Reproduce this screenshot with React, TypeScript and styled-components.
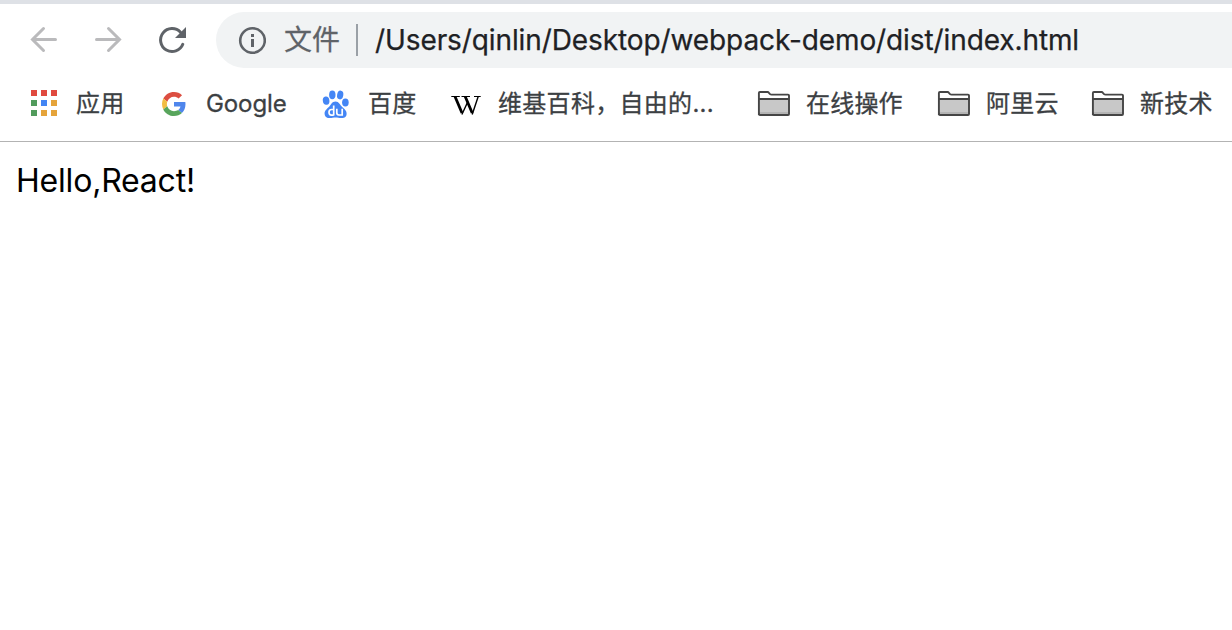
import React from "react";
import styled, { createGlobalStyle } from "styled-components";

const GlobalStyle = createGlobalStyle`
  * { box-sizing: border-box; }
  body { margin: 0; background: #fff; overflow: hidden; }
`;

const Browser = styled.div`
  width: 100%;
  height: 630px;
  display: flex;
  flex-direction: column;
  overflow: hidden;
  background: #fff;
  font-family: Inter, "Noto Sans CJK SC", sans-serif;
`;

const TabStripEdge = styled.div`
  height: 4px;
  flex: none;
  background: #dee1e6;
`;

const Toolbar = styled.div`
  height: 72px;
  flex: none;
  display: flex;
  align-items: center;
  padding-left: 28px;
`;

const NavButton = styled.button`
  width: 32px;
  height: 32px;
  margin: 0 32px 0 0;
  padding: 0;
  border: 0;
  background: none;
  flex: none;
  svg { display: block; }
`;

const AddressBar = styled.div`
  height: 56px;
  flex: 1;
  margin-left: -4px;
  display: flex;
  align-items: center;
  padding-left: 22px;
  border-radius: 28px 0 0 28px;
  background: #f1f3f4;
  white-space: nowrap;
  font-size: 28px;
  line-height: 40px;
  -webkit-text-stroke: 0.25px currentColor;
  svg { flex: none; }
`;

const Scheme = styled.span`
  width: 56px;
  margin-left: 18px;
  color: #5f6368;
`;

const Divider = styled.span`
  width: 2px;
  height: 32px;
  margin: 0 17px 0 16px;
  background: #9aa0a6;
`;

const Url = styled.span`
  color: #202124;
  letter-spacing: -0.1px;
`;

const BookmarkBar = styled.div`
  height: 66px;
  flex: none;
  display: flex;
  align-items: flex-start;
  padding: 10px 0 0 28px;
  border-bottom: 1px solid #b3b3b3;
`;

const Bookmark = styled.div<{ $labelWidth: number; $after: number; $spacing: number }>`
  display: flex;
  align-items: center;
  flex: none;
  height: 36px;
  margin-right: ${(p) => p.$after}px;
  svg { flex: none; }
  span {
    width: ${(p) => p.$labelWidth}px;
    margin-left: 16px;
    white-space: nowrap;
    font-size: 24px;
    line-height: 36px;
    letter-spacing: ${(p) => p.$spacing}px;
    color: #3c4043;
    -webkit-text-stroke: 0.3px currentColor;
  }
`;

const Page = styled.main`
  flex: 1;
  padding: 16px;
  font-size: 32px;
  line-height: 46px;
  color: #000;
`;

const Greeting = styled.div`
  letter-spacing: -0.2px;
`;

const BackIcon = () => (
  <svg width="32" height="32" viewBox="0 0 32 32" fill="none" stroke="#bababc" strokeWidth="3" strokeLinecap="round">
    <path d="M27.500 15.500H5M15.500 4.500 4.500 15.500 15.500 26.500" />
  </svg>
);

const ForwardIcon = () => (
  <svg width="32" height="32" viewBox="0 0 32 32" fill="none" stroke="#bababc" strokeWidth="3" strokeLinecap="round">
    <path d="M4.500 15.500H27M16.500 4.500 27.500 15.500 16.500 26.500" />
  </svg>
);

const ReloadIcon = () => (
  <svg width="32" height="32" viewBox="0 0 32 32">
    <path d="M26.800 20.300A11.500 11.500 0 1 1 24.500 8.200" fill="none" stroke="#5f6368" strokeWidth="3" strokeLinecap="round" />
    <path d="M30 3v11H19z" fill="#5f6368" />
  </svg>
);

const InfoIcon = () => (
  <svg width="28" height="28" viewBox="0 0 28 28">
    <circle cx="14.500" cy="14.500" r="12.300" fill="none" stroke="#5f6368" strokeWidth="2.600" />
    <path d="M13 8h3v3h-3zM13 13h3v8h-3z" fill="#5f6368" />
  </svg>
);

const APP_COLORS = ["#e04a3f", "#e04a3f", "#e04a3f", "#519b5c", "#4285f4", "#e5a43b", "#519b5c", "#e5a43b", "#e5a43b"];

const AppsIcon = () => (
  <svg width="32" height="32" viewBox="0 0 32 32">
    {APP_COLORS.map((color, i) => (
      <rect key={i} x={3 + (i % 3) * 10} y={2 + Math.floor(i / 3) * 10} width="6" height="6" fill={color} />
    ))}
  </svg>
);

const GoogleIcon = () => (
  <svg width="32" height="32" viewBox="0 0 32 32">
    <g transform="translate(4 4) scale(.5)">
      <path fill="#dc4e41" d="M24 9.500c3.540 0 6.710 1.220 9.210 3.600l6.850-6.850C35.900 2.380 30.470 0 24 0 14.620 0 6.510 5.380 2.560 13.220l7.980 6.190C12.430 13.720 17.740 9.500 24 9.500z" />
      <path fill="#4f86ec" d="M46.980 24.550c0-1.570-.15-3.090-.38-4.550H24v9.020h12.940c-.58 2.960-2.260 5.480-4.780 7.180l7.730 6c4.510-4.180 7.090-10.360 7.090-17.650z" />
      <path fill="#f2bd42" d="M10.530 28.590A14.400 14.400 0 0 1 9.770 24c0-1.600.27-3.140.76-4.590l-7.980-6.190A24 24 0 0 0 0 24c0 3.880.92 7.540 2.560 10.780z" />
      <path fill="#58a55c" d="M24 48c6.480 0 11.930-2.130 15.890-5.810l-7.730-6c-2.150 1.450-4.920 2.300-8.160 2.300-6.260 0-11.570-4.220-13.470-9.910l-7.980 6.190C6.510 42.620 14.620 48 24 48z" />
    </g>
  </svg>
);

const BaiduIcon = () => (
  <svg width="32" height="32" viewBox="0 0 32 32">
    <g fill="#4486f5">
      <ellipse cx="6.100" cy="12.600" rx="3.300" ry="4.200" transform="rotate(-8 6.100 12.600)" />
      <ellipse cx="12.300" cy="6.800" rx="3.200" ry="4.400" />
      <ellipse cx="20.200" cy="7" rx="3.100" ry="4.400" transform="rotate(10 20.200 7)" />
      <ellipse cx="25.400" cy="14.500" rx="3.300" ry="4.100" />
      <path d="M15.500 13.500c3.600 0 4.300 3.200 6.700 5.500 2.300 2.100 4.800 4 4.400 7.200-.4 3.400-3 3.900-5.500 3.900-2 0-3.500-.6-5.600-.6-2 0-3.600.6-5.600.6-2.500 0-5-.9-5.300-4.100-.3-3.300 2.300-5 4.500-7.200 2-2.100 2.900-5.300 6.400-5.300z" />
    </g>
    <g fill="none" stroke="#fff" strokeWidth="1.700">
      <path d="M13.700 17.500v10M13.700 21.500h-2.200q-2.500 0-2.500 2.800t2.500 2.800h2.200M16.800 20.800v4q0 2.200 2 2.200h3.400M22.200 20.800v6.900" />
    </g>
  </svg>
);

const WikipediaIcon = () => (
  <svg width="32" height="32" viewBox="0 0 32 32">
    <g fill="none" stroke="#000">
      <path d="M1.300 8.500h8.500M11.500 8.500h8.500M24 8.500h6.700" strokeWidth="1.100" />
      <path d="m5 8.500 7 16.500M15.200 8.500l7 16.500" strokeWidth="2.800" />
      <path d="m11.900 26.500 6-13M22.200 26.500l6-18" strokeWidth="1.400" />
    </g>
  </svg>
);

const FolderIcon = () => (
  <svg width="33" height="32" viewBox="0 0 33 32">
    <path d="M2 11h30v15H2z" fill="#c8c8c8" />
    <path d="M2 24h30v2H2z" fill="#b4b4b4" />
    <path d="M1.900 26V5q0-1 1-1h7.500q1 0 1.500.800l1.200 1.300q.5.500 1.500.500H31q1 0 1 1V26q0 1-1 1H3q-1 0-1-1zM2 11h30" fill="none" stroke="#454545" strokeWidth="1.900" />
  </svg>
);

const BOOKMARKS = [
  { label: "应用", Icon: AppsIcon, width: 48, after: 34, spacing: 0.2 },
  { label: "Google", Icon: GoogleIcon, width: 80, after: 34, spacing: -0.1 },
  { label: "百度", Icon: BaiduIcon, width: 48, after: 34, spacing: 0.2 },
  { label: "维基百科，自由的...", Icon: WikipediaIcon, width: 216, after: 43, spacing: 0.3 },
  { label: "在线操作", Icon: FolderIcon, width: 96, after: 35, spacing: 0.2 },
  { label: "阿里云", Icon: FolderIcon, width: 72, after: 33, spacing: 0.2 },
  { label: "新技术", Icon: FolderIcon, width: 72, after: 0, spacing: 0.2 },
];

export default function App() {
  return (
    <Browser>
      <GlobalStyle />
      <TabStripEdge />
      <Toolbar>
        <NavButton aria-label="Back"><BackIcon /></NavButton>
        <NavButton aria-label="Forward"><ForwardIcon /></NavButton>
        <NavButton aria-label="Reload"><ReloadIcon /></NavButton>
        <AddressBar>
          <InfoIcon />
          <Scheme>文件</Scheme>
          <Divider />
          <Url>/Users/qinlin/Desktop/webpack-demo/dist/index.html</Url>
        </AddressBar>
      </Toolbar>
      <BookmarkBar>
        {BOOKMARKS.map(({ label, Icon, width, after, spacing }) => (
          <Bookmark key={label} $labelWidth={width} $after={after} $spacing={spacing}>
            <Icon />
            <span>{label}</span>
          </Bookmark>
        ))}
      </BookmarkBar>
      <Page>
        <Greeting>Hello,React!</Greeting>
      </Page>
    </Browser>
  );
}
